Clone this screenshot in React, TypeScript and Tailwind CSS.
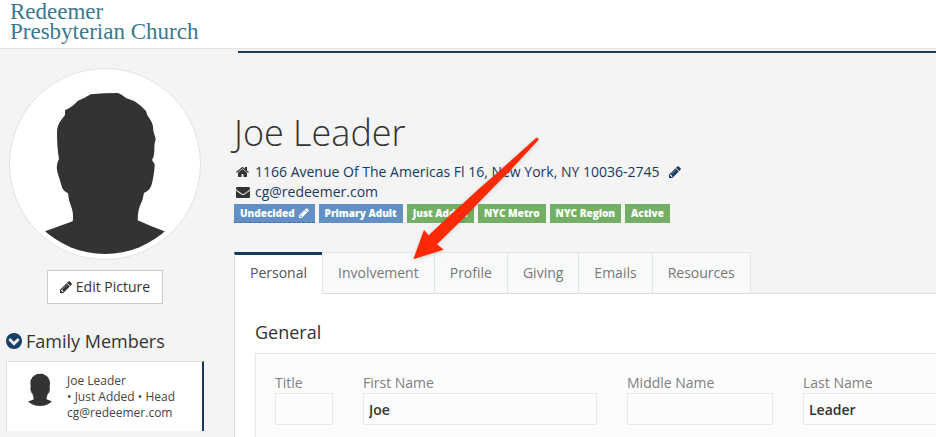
type IconProps = { className?: string };

const Pencil = ({ className }: IconProps) => (
  <svg viewBox="0 0 1536 1792" fill="currentColor" className={className} aria-hidden="true">
    <path d="M363 1536l91-91-235-235-91 91v107h128v128h107zM886 608q0-22-22-22-10 0-17 7l-542 542q-7 7-7 17 0 22 22 22 10 0 17-7l542-542q7-7 7-17zM832 416l416 416-832 832h-416v-416zM1515 512q0 53-37 90l-166 166-416-416 166-165q36-38 90-38 53 0 91 38l235 234q37 39 37 91z" />
  </svg>
);

const Home = ({ className }: IconProps) => (
  <svg viewBox="0 0 1664 1792" fill="currentColor" className={className} aria-hidden="true">
    <path d="M1408 992v480q0 26-19 45t-45 19h-384v-384h-256v384h-384q-26 0-45-19t-19-45v-480q0-1 .5-3t.5-3l575-474 575 474q1 2 1 6zm223-69l-62 74q-8 9-21 11h-3q-13 0-21-7l-692-577-692 577q-12 8-24 7-13-2-21-11l-62-74q-8-10-7-23.5t11-21.5l719-599q32-26 76-26t76 26l244 204v-195q0-14 9-23t23-9h192q14 0 23 9t9 23v408l219 182q10 8 11 21.5t-7 23.5z" />
  </svg>
);

const Envelope = ({ className }: IconProps) => (
  <svg viewBox="0 0 1792 1792" fill="currentColor" className={className} aria-hidden="true">
    <path d="M1792 710v794q0 66-47 113t-113 47h-1472q-66 0-113-47t-47-113v-794q44 49 101 87 362 246 497 345 57 42 92.5 65.5t94.5 48 110 24.5h2q51 0 110-24.5t94.5-48 92.5-65.5q170-123 498-345 57-39 100-87zm0-294q0 79-49 151t-122 123q-376 261-468 325-10 7-42.5 31t-54 38.5-52 32.5-57.5 27-50 9h-2q-23 0-50-9t-57.5-27-52-32.5-54-38.5-42.5-31q-91-64-262-182.5t-205-142.5q-62-42-117-115.5t-55-136.5q0-78 41.5-130t118.5-52h1472q65 0 112.5 47t47.5 113z" />
  </svg>
);

const ChevronCircle = ({ className }: IconProps) => (
  <svg viewBox="0 128 1536 1536" fill="currentColor" className={className} aria-hidden="true">
    <path d="M813 1299l454-454q19-19 19-45t-19-45l-102-102q-19-19-45-19t-45 19l-307 307-307-307q-19-19-45-19t-45 19l-102 102q-19 19-19 45t19 45l454 454q19 19 45 19t45-19zM1536 896q0 209-103 385.5t-279.5 279.5-385.5 103-385.5-103-279.5-279.5-103-385.5 103-385.5 279.5-279.5 385.5-103 385.5 103 279.5 279.5 103 385.5z" />
  </svg>
);

const Silhouette = ({ className }: IconProps) => (
  <svg viewBox="45 42 540 540" className={className} role="img" aria-label="Joe Leader">
    <path
      fill="#333"
      d="M272 103Q310 99 354 99Q364 102 378 114L404 124Q425 138 438 153Q440 166 450 178Q460 193 460 212L467 236Q462 255 463 270Q463 290 456 300L464 313Q464 335 457 365Q453 390 432 399Q429 420 420 437Q413 455 413 481Q450 498 493 514L600 560V600H30V560L137 513Q180 498 218 484Q221 465 216 447L207 420L204 400Q187 392 184 375L172 335Q167 315 177 297Q171 265 171 215Q172 195 182 182L195 165V151Q210 144 220 136L234 122Q252 116 272 103Z"
    />
  </svg>
);

const Arrow = ({ className }: IconProps) => (
  <svg viewBox="0 0 450 435" className={className} aria-hidden="true">
    <path
      fill="#fe2a05"
      d="M40 403L72 314L86 331L155 266L237 191L298 138L408 39Q415 37 416 44L330 137L275 193L232 237L195 276L111 358L131 374Z"
    />
  </svg>
);

const tags = [
  { label: "Primary Adult", color: "bg-[#6290c4]" },
  { label: "Just Added", color: "bg-[#73b066]" },
  { label: "NYC Metro", color: "bg-[#73b066]" },
  { label: "NYC Region", color: "bg-[#73b066]" },
  { label: "Active", color: "bg-[#73b066]" },
];

const tabs = ["Involvement", "Profile", "Giving", "Emails", "Resources"];

const fields = [
  { id: "title", label: "Title", value: "" },
  { id: "first", label: "First Name", value: "Joe" },
  { id: "middle", label: "Middle Name", value: "" },
  { id: "last", label: "Last Name", value: "Leader" },
];

const Sidebar = () => {
  return (
    <aside className="w-[234px] shrink-0 pt-[19px] pl-1.5">
      <div className="ml-[3px] w-48 h-48 p-[5px] rounded-full border border-[#e2e2e2] bg-white">
        <Silhouette className="w-full h-full rounded-full overflow-hidden" />
      </div>
      <button className="ml-[41px] mt-2.5 flex items-center justify-center gap-1 w-[116px] h-[34px] border border-[#ccc] bg-white">
        <Pencil className="w-3 h-[14px]" />
        Edit Picture
      </button>
      <h2 className="mt-[23px] flex items-center gap-1 h-7 text-lg">
        <ChevronCircle className="w-4 h-4 text-[#173f69]" />
        Family Members
      </h2>
      <div className="mt-1.5 flex w-[198px] h-[70px] pl-[15px] pt-2 border-t border-l border-r-2 border-t-[#ddd] border-l-[#ddd] border-r-[#163a5f] bg-white">
        <Silhouette className="w-9 h-9 rounded-full overflow-hidden" />
        <div className="ml-[9px] pt-[3px] text-xs leading-4 text-[#444]">
          <p>Joe Leader</p>
          <p>• Just Added • Head</p>
          <p>cg@redeemer.com</p>
        </div>
      </div>
    </aside>
  );
};

const ProfileHeader = () => {
  return (
    <div className="pt-14">
      <h1 className="text-4xl leading-[48px] font-light">Joe Leader</h1>
      <div className="mt-[5px] flex items-center h-5">
        <Home className="ml-0.5 mr-1.5 w-[13px] h-[14px]" />
        <a href="#address" className="text-[#163a5f]">
          1166 Avenue Of The Americas Fl 16, New York, NY 10036-2745
        </a>
        <a href="#edit-address" aria-label="Edit address" className="ml-2.5 text-[#163a5f]">
          <Pencil className="w-3 h-[14px]" />
        </a>
      </div>
      <div className="flex items-center h-5">
        <Envelope className="ml-0.5 mr-[5px] w-[14px] h-[14px]" />
        <a href="#email" className="text-[#163a5f]">
          cg@redeemer.com
        </a>
      </div>
      <div className="mt-0.5 flex gap-1 text-[10px] leading-[19px] font-extrabold text-white whitespace-nowrap">
        <button className="flex items-center gap-1 px-1.5 border-b border-dashed border-[#3f6ea3] bg-[#6290c4] leading-[18px]">
          Undecided
          <Pencil className="w-2.5 h-3" />
        </button>
        {tags.map((tag) => (
          <span key={tag.label} className={"px-1.5 " + tag.color}>
            {tag.label}
          </span>
        ))}
      </div>
    </div>
  );
};

const PersonalPanel = () => {
  return (
    <section className="pt-[27px] pl-5 border-l border-[#ddd] bg-white">
      <h2 className="text-lg leading-[22px]">General</h2>
      <div className="mt-2.5 min-w-[820px] grid grid-cols-[58px_234px_146px_234px] gap-x-[30px] pt-[19px] px-[19px] pb-3 border border-b-0 border-[#e6e6e6] bg-[#fcfcfc]">
        {fields.map((field) => (
          <div key={field.id}>
            <label htmlFor={field.id} className="block leading-5 text-[#808080]">
              {field.label}
            </label>
            <input
              id={field.id}
              type="text"
              defaultValue={field.value}
              className="w-full h-8 px-[5px] border border-[#e8e8e8] bg-[#fcfcfc] font-semibold text-[#333]"
            />
          </div>
        ))}
      </div>
    </section>
  );
};

export default function App() {
  return (
    <div className="relative min-h-screen overflow-hidden bg-[#f4f4f4] font-['Open_Sans',sans-serif] text-sm text-[#333]">
      <header className="h-[49px] pl-2.5 pt-0.5 border-b border-[#e0e4e6] bg-white font-['Liberation_Serif',serif] text-[23px] leading-5 text-[#3a7890]">
        <p>Redeemer</p>
        <p>Presbyterian Church</p>
      </header>
      <div className="flex">
        <Sidebar />
        <main className="flex-1 min-w-0 pt-0.5">
          <div className="ml-1 h-0.5 bg-[#1d3a52]"></div>
          <ProfileHeader />
          <nav className="mt-[29px] flex border-b border-[#ddd] bg-[#f4f4f4]">
            <button className="-mb-px h-[42px] w-[88px] pb-[3px] border-t-[3px] border-t-[#163a5f] border-l border-l-[#ddd] bg-white text-[#555]">
              Personal
            </button>
            {tabs.map((tab) => (
              <button
                key={tab}
                className="h-[41px] px-[15px] border-t border-l last:border-r border-[#e2e6e9] bg-[#f8f9f9] text-[#777]"
              >
                {tab}
              </button>
            ))}
          </nav>
          <PersonalPanel />
        </main>
      </div>
      <Arrow className="absolute left-[400px] top-[125px] w-[150px] h-[145px] drop-shadow-sm pointer-events-none" />
    </div>
  );
}
